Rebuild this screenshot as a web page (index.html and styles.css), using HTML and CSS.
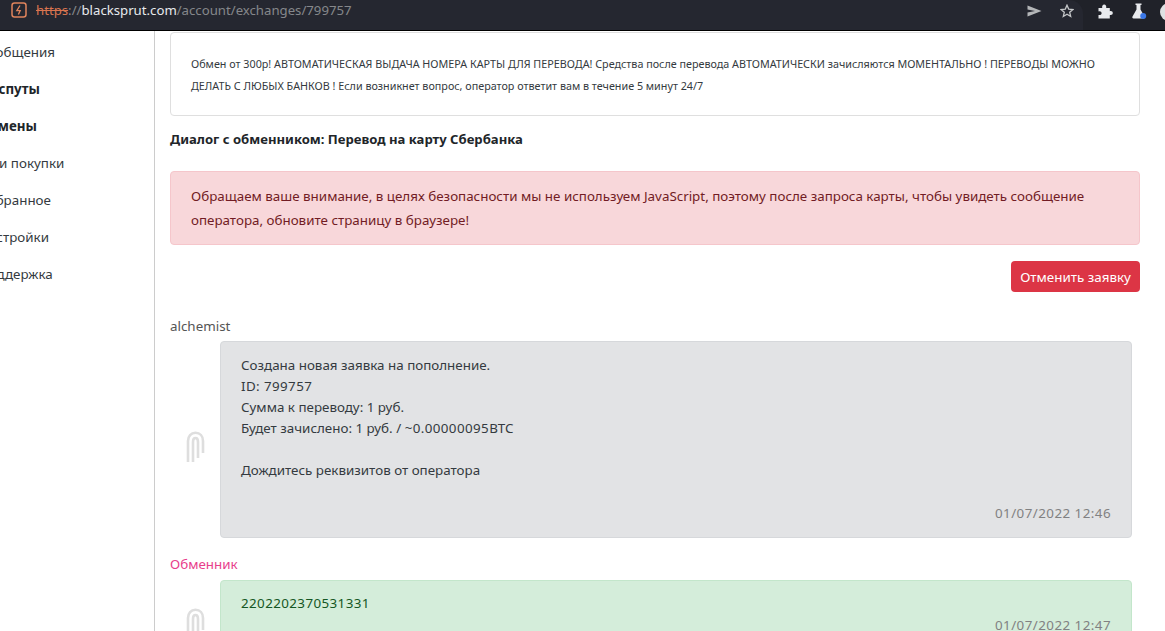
FILE: index.html
```html
<!DOCTYPE html>
<html lang="ru">
<head>
<meta charset="utf-8">
<title>Обмен</title>
<link rel="stylesheet" href="styles.css">
</head>
<body>
<header class="browser">
  <div class="omnibox">
    <svg class="site-icon" width="16" height="16" viewBox="0 0 16 16" fill="none"><rect x="1" y="1" width="14" height="14" rx="2.5" stroke="#e0845c" stroke-width="1.5"/><path d="M9 3.5 5.8 8.6h3.4L7.4 12.5" stroke="#e0845c" stroke-width="1.3"/></svg>
    <div class="url"><span class="scheme">https</span><span class="dim">://</span><span class="host">blacksprut.com</span><span class="dim">/account/exchanges/799757</span></div>
    <svg class="send" width="15" height="12" viewBox="0 0 15 12"><path d="M0.5 0.5 14.5 6 0.5 11.5 0.5 7.5 8 6 0.5 4.5Z" fill="#b4b6b8"/></svg>
    <svg class="star" width="14" height="14" viewBox="0 0 14 14" fill="none"><path d="M7 1.2 8.7 5.1 12.9 5.5 9.7 8.3 10.7 12.5 7 10.3 3.3 12.5 4.3 8.3 1.1 5.5 5.3 5.1Z" stroke="#c4c6c8" stroke-width="1.3"/></svg>
  </div>
  <div class="tools">
    <svg class="puzzle" width="15" height="15" viewBox="0 0 15 15"><path d="M0.5 4H4.2C3.8 1.8 4.8 0.5 6.2 0.5S8.6 1.8 8.2 4H11.8V7.2C13.8 6.8 14.8 7.8 14.8 9.1S13.8 11.4 11.8 11V14.5H0.5V11C2.6 11.4 3.6 10.5 3.6 9.2S2.6 7 0.5 7.4Z" fill="#e8eaed"/></svg>
    <svg class="flask" width="16" height="16" viewBox="0 0 16 16"><path d="M4.5 0.5H10.5V2H9.5V6.5L13.5 13.5C14 14.5 13.4 15.5 12.4 15.5H2.6C1.6 15.5 1 14.5 1.5 13.5L5.5 6.5V2H4.5Z" fill="#e8eaed"/><circle cx="12.2" cy="13" r="3" fill="#3b78e7"/></svg>
    <div class="avatar"></div>
  </div>
</header>
<div class="page">
  <nav class="sidebar">
    <a class="nav-link">Сообщения</a>
    <a class="nav-link bold">Диспуты</a>
    <a class="nav-link bold">Обмены</a>
    <a class="nav-link">Мои покупки</a>
    <a class="nav-link">Избранное</a>
    <a class="nav-link">Настройки</a>
    <a class="nav-link">Поддержка</a>
  </nav>
  <main class="content">
    <section class="info-card">
      <p>Обмен от 300р! АВТОМАТИЧЕСКАЯ ВЫДАЧА НОМЕРА КАРТЫ ДЛЯ ПЕРЕВОДА! Средства после перевода АВТОМАТИЧЕСКИ зачисляются МОМЕНТАЛЬНО ! ПЕРЕВОДЫ МОЖНО ДЕЛАТЬ С ЛЮБЫХ БАНКОВ ! Если возникнет вопрос, оператор ответит вам в течение 5 минут 24/7</p>
    </section>
    <h2 class="dialog-title">Диалог с обменником: Перевод на карту Сбербанка</h2>
    <div class="alert">Обращаем ваше внимание, в целях безопасности мы не используем JavaScript, поэтому после запроса карты, чтобы увидеть сообщение оператора, обновите страницу в браузере!</div>
    <div class="actions"><button class="btn-cancel">Отменить заявку</button></div>
    <div class="author">alchemist</div>
    <div class="message-row">
      <div class="avatar-col"><svg class="logo" width="20" height="32" viewBox="0 0 20 32" fill="none"><g stroke="#dedede" stroke-width="2.6"><path d="M3 31V10C3 5 6 1.8 10.5 1.8S18 5 18 10V22"/><path d="M8 31V11C8 8.5 9 7 10.5 7S13 8.500 13 11V27"/></g></svg></div>
      <div class="bubble grey">
        <p>Создана новая заявка на пополнение.<br><span class="num">ID: 799757</span><br>Сумма к переводу: 1 руб.<br>Будет зачислено: 1 руб. / <span class="num">~0.00000095</span>BTC<br><br>Дождитесь реквизитов от оператора</p>
        <time>01/07/2022 12:46</time>
      </div>
    </div>
    <div class="author pink">Обменник</div>
    <div class="message-row next">
      <div class="avatar-col"><svg class="logo" width="20" height="32" viewBox="0 0 20 32" fill="none"><g stroke="#dedede" stroke-width="2.6"><path d="M3 31V10C3 5 6 1.8 10.5 1.8S18 5 18 10V22"/><path d="M8 31V11C8 8.5 9 7 10.5 7S13 8.500 13 11V27"/></g></svg></div>
      <div class="bubble green">
        <p class="num">2202202370531331</p>
        <time>01/07/2022 12:47</time>
      </div>
    </div>
  </main>
</div>
</body>
</html>
```
FILE: styles.css
```css
* { box-sizing: border-box; }
html, body { margin: 0; height: 631px; overflow: hidden; background: #fff; }
body { font-family: "Noto Sans", "Open Sans", sans-serif; font-size: 13.38px; color: #343a40; }
.browser { height: 31px; background: #202229; display: flex; border-bottom: 1px solid #000; }
.omnibox { width: 1083px; height: 30px; flex: none; display: flex; align-items: flex-start; padding: 2px 0 0 11px; background: #252730; border-radius: 0 14px 0 0; }
.site-icon { flex: none; }
.url { margin: 1px 0 0 9px; font-size: 13.2px; line-height: 15px; color: #85878b; white-space: nowrap; width: 991px; }
.scheme { color: #d9744f; text-decoration: line-through; }
.dim { color: #85878b; }
.host { color: #e8eaed; }
.send { margin-top: 3px; flex: none; }
.star { margin: 2px 0 0 18px; flex: none; }
.tools { display: flex; align-items: flex-start; flex: 1; padding: 3px 0 0 15px; }
.puzzle { margin-top: 1px; flex: none; }
.flask { margin-left: 18px; flex: none; }
.avatar { width: 18px; height: 18px; border-radius: 50%; background: #dfe1e3; margin-left: 13px; flex: none; }
.page { display: flex; height: 600px; }
.sidebar { width: 155px; flex: none; border-right: 1px solid #ccc; padding-top: 11px; overflow: hidden; }
.nav-link { display: block; height: 37px; line-height: 21px; margin-left: -21px; color: #343a40; white-space: nowrap; }
.bold { font-weight: 700; color: #212529; }
.content { width: 970px; margin-left: 15px; flex: none; }
.info-card { border: 1px solid #dfdfdf; border-radius: 4px; height: 84px; margin-top: 1px; padding: 20px 20px 0; }
.info-card p { margin: 0; font-size: 10.78px; line-height: 21.6px; color: #343a40; }
.dialog-title { margin: 15px 0 0; font-size: 13.1px; line-height: 17px; font-weight: 700; color: #212529; }
.alert { margin-top: 23px; height: 74px; background: #f8d7da; border: 1px solid #f5c6cb; border-radius: 4px; padding: 12px 20px; line-height: 24px; color: #721c24; }
.actions { display: flex; justify-content: flex-end; margin-top: 16px; }
.btn-cancel { height: 31px; width: 129px; padding: 0; border: 0; border-radius: 4px; background: #dc3545; color: #fff; font: inherit; }
.author { margin-top: 25px; line-height: 18px; color: #555; }
.pink { color: #e83e8c; margin-top: 17px; }
.message-row { display: flex; margin-top: 6px; }
.message-row.next { margin-top: 7px; }
.avatar-col { width: 50px; flex: none; display: flex; align-items: center; padding: 15px 0 0 15px; }
.bubble { width: 912px; border-radius: 4px; border: 1px solid #d6d8db; padding: 13px 20px; }
.bubble p { margin: 0; line-height: 21px; }
.bubble time { display: block; text-align: right; color: #818182; letter-spacing: 0.45px; }
.num { letter-spacing: 0.4px; }
.grey { background: #e2e3e5; height: 197px; }
.grey time { margin-top: 23px; }
.green { background: #d4edda; border-color: #c3e6cb; color: #155724; height: 72px; padding-top: 12px; }
.green time { margin-top: 2px; }
```
